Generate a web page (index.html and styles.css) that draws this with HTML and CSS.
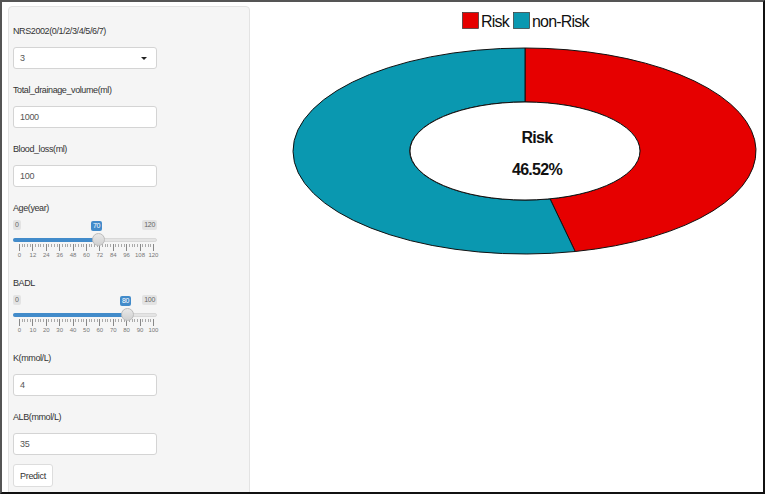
FILE: index.html
```html
<!DOCTYPE html>
<html>
<head>
  <title>Risk prediction</title>
  <link rel="stylesheet" href="styles.css">
</head>
<body>
  <div class="frame">
    <div class="sidebar">
      <div class="well">
        <div class="field">
          <label>NRS2002(0/1/2/3/4/5/6/7)</label>
          <div class="input select">3<span class="caret"></span></div>
        </div>
        <div class="field">
          <label>Total_drainage_volume(ml)</label>
          <div class="input">1000</div>
        </div>
        <div class="field">
          <label>Blood_loss(ml)</label>
          <div class="input">100</div>
        </div>

        <div class="field">
          <label class="slider-label">Age(year)</label>
          <div class="slider">
            <div class="limits"><span class="lim">0</span><span class="lim">120</span></div>
            <span class="val" style="left: 78px;">70</span>
            <div class="track">
              <div class="fill" style="width: 84px;"></div>
              <div class="handle" style="left: 77.5px;"></div>
            </div>
            <div class="ticks"></div>
            <div class="nums">
              <span>0</span><span>12</span><span>24</span><span>36</span><span>48</span><span>60</span><span>72</span><span>84</span><span>96</span><span>108</span><span>120</span>
            </div>
          </div>
        </div>

        <div class="field">
          <label class="slider-label">BADL</label>
          <div class="slider">
            <div class="limits"><span class="lim">0</span><span class="lim">100</span></div>
            <span class="val" style="left: 107px;">80</span>
            <div class="track">
              <div class="fill" style="width: 113px;"></div>
              <div class="handle" style="left: 106.7px;"></div>
            </div>
            <div class="ticks"></div>
            <div class="nums">
              <span>0</span><span>10</span><span>20</span><span>30</span><span>40</span><span>50</span><span>60</span><span>70</span><span>80</span><span>90</span><span>100</span>
            </div>
          </div>
        </div>

        <div class="field">
          <label>K(mmol/L)</label>
          <div class="input">4</div>
        </div>
        <div class="field field-last">
          <label>ALB(mmol/L)</label>
          <div class="input">35</div>
        </div>
        <button class="btn">Predict</button>
      </div>
    </div>

    <div class="main">
      <svg class="chart" width="513" height="490" viewBox="0 0 513 490">
        <!-- legend -->
        <rect x="212.5" y="10.5" width="16" height="16" fill="#e60000" stroke="#333" stroke-width="0.7"/>
        <text class="legend" x="231" y="25">Risk</text>
        <rect x="263.5" y="10.5" width="16" height="16" fill="#0a98b0" stroke="#333" stroke-width="0.7"/>
        <text class="legend" x="282" y="25">non-Risk</text>

        <!-- donut: risk share 46.52% from 12 o'clock, clockwise -->
        <path d="M275,46 A231.5,103 0 0 1 325.2,249.5 L300,196.8 A115,49 0 0 0 275,100 Z"
              fill="#e60000" stroke="#111" stroke-width="1"/>
        <path d="M275,46 A231.5,103 0 1 0 325.2,249.5 L300,196.8 A115,49 0 1 1 275,100 Z"
              fill="#0a98b0" stroke="#111" stroke-width="1"/>
        <ellipse cx="275" cy="149" rx="115" ry="49" fill="#fff" stroke="#111" stroke-width="1"/>

        <text class="center" x="287" y="141">Risk</text>
        <text class="center" x="287" y="173">46.52%</text>
      </svg>
    </div>
  </div>
</body>
</html>
```

FILE: styles.css
```css
body {
  margin: 0;
  background: #fff;
  font-family: "Liberation Sans", Arial, sans-serif;
}

.frame {
  width: 761px;
  height: 490px;
  border: 2px solid;
  border-color: #555 #111 #111 #555;
  display: flex;
  overflow: hidden;
  background: #fff;
}

.sidebar {
  padding: 4px 0 0 6px;
  flex-shrink: 0;
}

.well {
  width: 242px;
  height: 600px;
  box-sizing: border-box;
  background: #f5f5f5;
  border: 1px solid #e3e3e3;
  border-radius: 4px;
  padding: 18px 4px 0;
}

.field {
  margin-bottom: 15px;
}

.field-last {
  margin-bottom: 9px;
}

.field label {
  display: block;
  font-size: 9px;
  line-height: 12px;
  margin-bottom: 10px;
  color: #333;
  letter-spacing: -0.4px;
}

.field label.slider-label {
  margin-bottom: 6px;
}

.input {
  width: 144px;
  height: 22px;
  box-sizing: border-box;
  border: 1px solid #d4d4d4;
  border-radius: 3px;
  background: #fff;
  padding: 0 6px;
  font-size: 9px;
  color: #555;
  display: flex;
  align-items: center;
  letter-spacing: -0.3px;
}

.select {
  justify-content: space-between;
  padding-right: 9px;
}

.caret {
  width: 0;
  height: 0;
  border-left: 3px solid transparent;
  border-right: 3px solid transparent;
  border-top: 3px solid #222;
}

/* range slider */
.slider {
  position: relative;
  width: 144px;
  height: 42px;
}

.limits {
  display: flex;
  justify-content: space-between;
  margin-top: 1px;
  height: 10px;
}

.lim,
.val {
  font-size: 7px;
  line-height: 10px;
  padding: 0 2px;
  border-radius: 2px;
  letter-spacing: -0.3px;
}

.lim {
  background: #e3e3e3;
  color: #666;
}

.val {
  position: absolute;
  top: 1px;
  background: #428bca;
  color: #fff;
}

.track {
  position: relative;
  height: 4px;
  margin-top: 8px;
  background: #e4e4e4;
  border: 1px solid #d8d8d8;
  box-sizing: border-box;
  border-radius: 2px;
}

.fill {
  height: 4px;
  margin-top: -1px;
  margin-left: -1px;
  background: #428bca;
  border-radius: 2px 0 0 2px;
}

.handle {
  position: absolute;
  top: -6.5px;
  width: 13px;
  height: 13px;
  box-sizing: border-box;
  border-radius: 50%;
  background: linear-gradient(#e8e8e8, #d0d0d0);
  border: 1px solid #bcbcbc;
}

.ticks {
  margin: 2px 0 0 6px;
  width: 135px;
  height: 7px;
  background-image:
    repeating-linear-gradient(to right, #888 0 1px, transparent 1px 13.4px),
    repeating-linear-gradient(to right, #aaa 0 1px, transparent 1px 2.68px);
  background-size: 100% 7px, 100% 3px;
  background-repeat: no-repeat;
}

.nums {
  display: flex;
  justify-content: space-between;
  margin: 1px 0 0 6.5px;
  width: 134px;
  height: 7px;
}

.nums span {
  width: 0;
  display: flex;
  justify-content: center;
  font-size: 6px;
  line-height: 7px;
  color: #777;
  white-space: nowrap;
}

.btn {
  display: block;
  height: 23px;
  padding: 0 6px;
  border: 1px solid #ddd;
  border-radius: 3px;
  background: #fff;
  font-family: "Liberation Sans", Arial, sans-serif;
  font-size: 9px;
  color: #333;
  letter-spacing: -0.3px;
}

.main {
  flex: 1;
}

.chart {
  display: block;
}

.chart .legend {
  font-size: 16px;
  letter-spacing: -0.8px;
  fill: #111;
}

.chart .center {
  font-size: 16px;
  font-weight: bold;
  letter-spacing: -0.7px;
  text-anchor: middle;
  fill: #111;
}
```
